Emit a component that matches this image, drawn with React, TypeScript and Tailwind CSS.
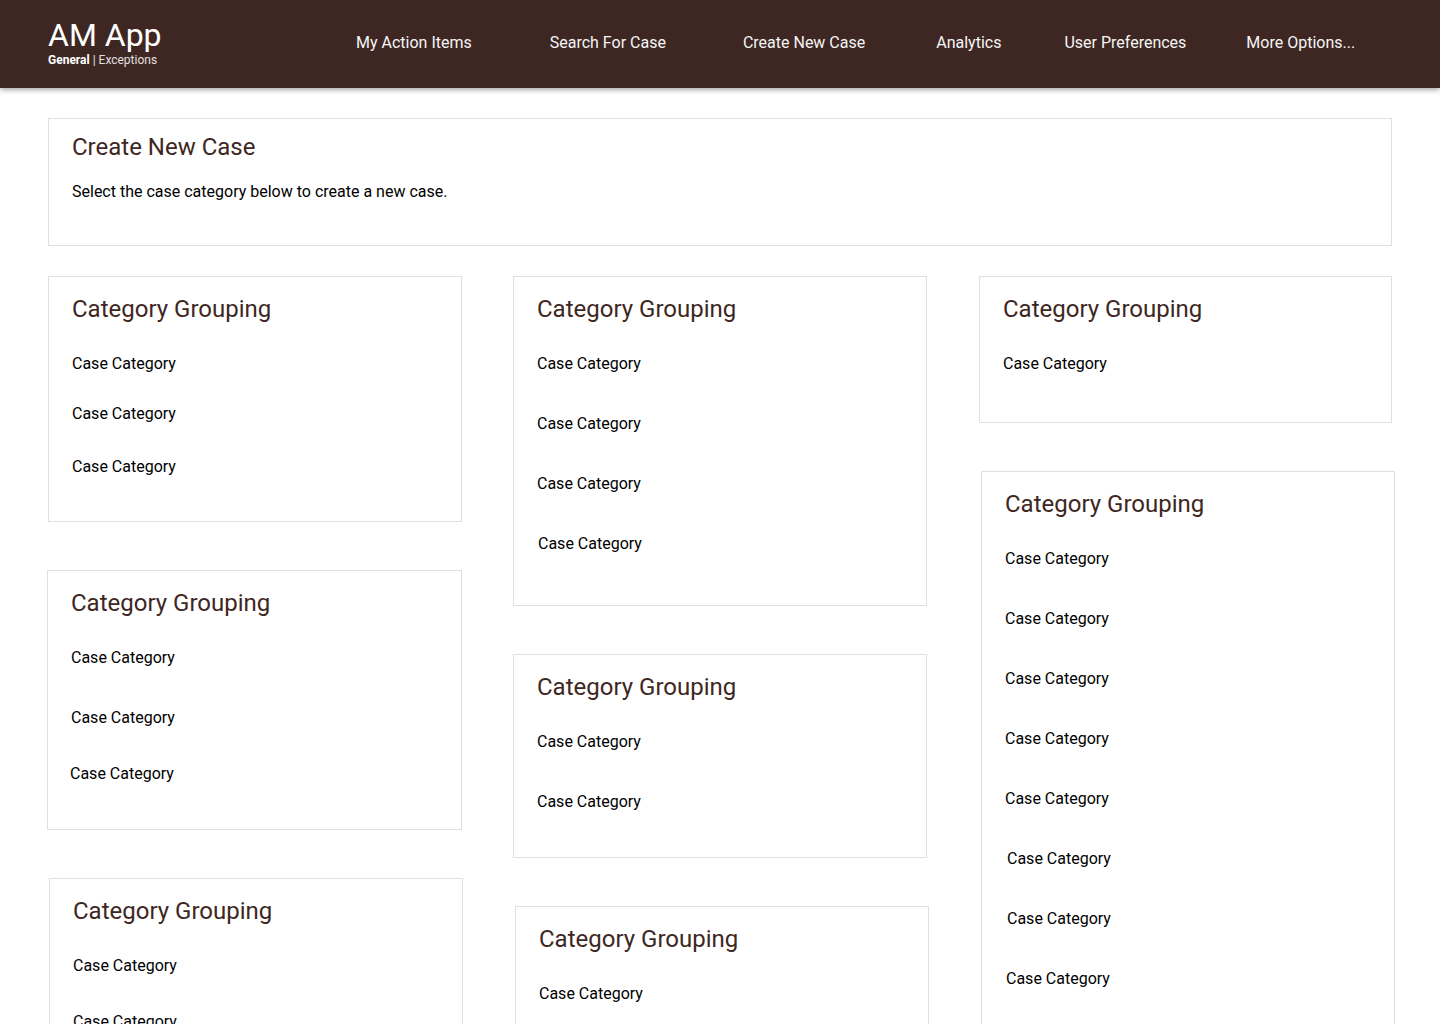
import React from 'react';

type Item = { mt: string; dx?: string };
type Group = { id: string; shift?: string; pb: string; items: Item[] };

const navItems = [
  { label: 'My Action Items', ml: '' },
  { label: 'Search For Case', ml: 'ml-[78px]' },
  { label: 'Create New Case', ml: 'ml-[77px]' },
  { label: 'Analytics', ml: 'ml-[71px]' },
  { label: 'User Preferences', ml: 'ml-[63px]' },
  { label: 'More Options...', ml: 'ml-[60px]' },
];

const columns: Group[][] = [
  [
    { id: 'a', pb: 'pb-[42px]', items: [{ mt: 'mt-[29px]' }, { mt: 'mt-[26px]' }, { mt: 'mt-[29px]' }] },
    {
      id: 'b',
      shift: '-ml-px',
      pb: 'pb-[43px]',
      items: [{ mt: 'mt-[29px]' }, { mt: 'mt-[36px]' }, { mt: 'mt-[32px]', dx: '-ml-px' }],
    },
    {
      id: 'c',
      shift: 'ml-px -mr-px',
      pb: 'pb-[43px]',
      items: [{ mt: 'mt-[29px]' }, { mt: 'mt-[32px]' }, { mt: 'mt-[36px]' }],
    },
  ],
  [
    {
      id: 'd',
      pb: 'pb-[49px]',
      items: [{ mt: 'mt-[29px]' }, { mt: 'mt-[36px]' }, { mt: 'mt-[36px]' }, { mt: 'mt-[36px]', dx: 'ml-px' }],
    },
    { id: 'e', pb: 'pb-[43px]', items: [{ mt: 'mt-[29px]' }, { mt: 'mt-[36px]' }] },
    {
      id: 'f',
      shift: 'ml-[2px] -mr-[2px]',
      pb: 'pb-[43px]',
      items: [{ mt: 'mt-[29px]' }, { mt: 'mt-[36px]' }],
    },
  ],
  [
    { id: 'g', shift: 'ml-px', pb: 'pb-[46px]', items: [{ mt: 'mt-[29px]' }] },
    {
      id: 'h',
      shift: 'ml-[3px] -mr-[3px]',
      pb: 'pb-[43px]',
      items: [
        { mt: 'mt-[29px]' },
        { mt: 'mt-[36px]' },
        { mt: 'mt-[36px]' },
        { mt: 'mt-[36px]' },
        { mt: 'mt-[36px]' },
        { mt: 'mt-[36px]', dx: 'ml-[2px]' },
        { mt: 'mt-[36px]', dx: 'ml-[2px]' },
        { mt: 'mt-[36px]', dx: 'ml-px' },
        { mt: 'mt-[36px]', dx: 'ml-px' },
      ],
    },
  ],
];

const GroupCard: React.FC<{ group: Group }> = ({ group }) => (
  <div className={`border border-[#e0e0e0] bg-white pl-[23px] pr-6 pt-[18px] ${group.pb} ${group.shift ?? ''}`}>
    <h2 className="text-[24px] leading-7 text-[#3e2723]">Category Grouping</h2>
    {group.items.map((item, i) => (
      <div key={i} className={`${item.mt} ${item.dx ?? ''} text-base leading-6 text-black cursor-pointer`}>
        Case Category
      </div>
    ))}
  </div>
);

export default function App() {
  return (
    <div className="min-h-screen bg-white font-['Roboto','Liberation_Sans',sans-serif]">
      <header className="relative z-10 flex h-[88px] items-start bg-[#3e2723] px-12 shadow-[0_2px_5px_rgba(0,0,0,0.35)]">
        <div className="w-[308px] shrink-0 pt-[17px]">
          <div className="text-[32px] leading-9 text-white">AM App</div>
          <div className="text-[12px] leading-[14px] text-white/85">
            <span className="font-bold text-white">General</span> | Exceptions
          </div>
        </div>
        <nav className="flex pt-[31px]">
          {navItems.map((n) => (
            <a key={n.label} className={`${n.ml} text-base leading-6 text-[#f5f5f5] whitespace-nowrap cursor-pointer`}>
              {n.label}
            </a>
          ))}
        </nav>
      </header>

      <main className="px-12 pt-[30px]">
        <section className="border border-[#e0e0e0] pl-[23px] pr-6 pt-[14px] pb-[41px]">
          <h1 className="text-[24px] leading-7 text-[#3e2723]">Create New Case</h1>
          <p className="mt-[19px] text-base leading-6 text-black">
            Select the case category below to create a new case.
          </p>
        </section>

        <div className="mt-[30px] grid grid-cols-3 items-start gap-x-[51px]">
          {columns.map((col, ci) => (
            <div key={ci} className="flex flex-col gap-12">
              {col.map((g) => (
                <GroupCard key={g.id} group={g} />
              ))}
            </div>
          ))}
        </div>
      </main>
    </div>
  );
}
